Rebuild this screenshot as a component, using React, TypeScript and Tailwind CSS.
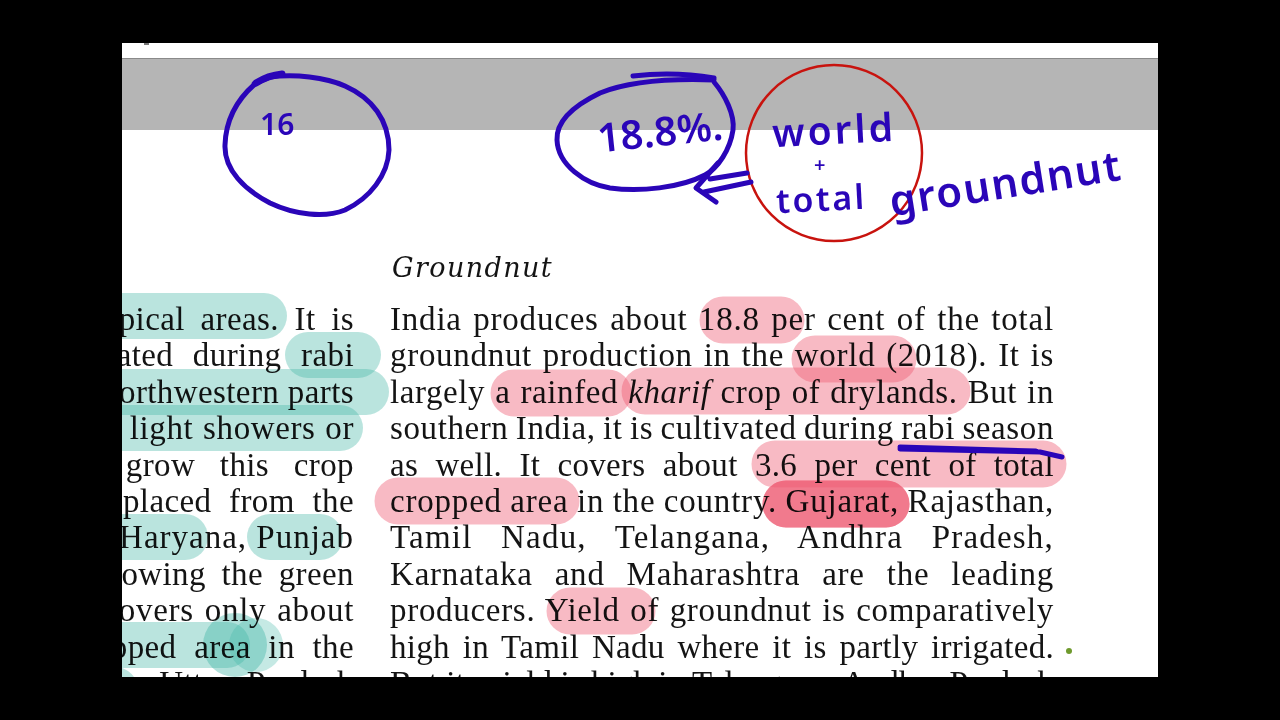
const rightLines = [
    { text: 'India produces about 18.8 per cent of the total', className: 'tracking-[0.8px] [word-spacing:-3px]' },
    { text: 'groundnut production in the world (2018). It is', className: 'tracking-[0.7px] [word-spacing:-3px]' },
    { text: 'largely a rainfed', italic: 'kharif', rest: 'crop of drylands. But in', className: 'tracking-[0.6px] [word-spacing:-2px]' },
    { text: 'southern India, it is cultivated during rabi season', className: 'tracking-[0.6px] [word-spacing:-4px]' },
    { text: 'as well. It covers about 3.6 per cent of total', className: 'tracking-[0.3px]' },
    { text: 'cropped area in the country. Gujarat, Rajasthan,', className: 'tracking-[0.8px] [word-spacing:-5px]' },
    { text: 'Tamil Nadu, Telangana, Andhra Pradesh,', className: 'tracking-[1.2px]' },
    { text: 'Karnataka and Maharashtra are the leading', className: 'tracking-[0.8px]' },
    { text: 'producers. Yield of groundnut is comparatively', className: 'tracking-[0.7px] [word-spacing:-5px]' },
    { text: 'high in Tamil Nadu where it is partly irrigated.', className: 'tracking-[0.3px]' },
    { text: 'But its yield is high in Telangana, Andhra Pradesh', className: 'tracking-[0px] [word-spacing:-1px]' },
];

const leftLines = [
    { text: 'tropical areas. It is', className: 'tracking-[0.4px] [word-spacing:7px]' },
    { text: 'cultivated during rabi', className: 'tracking-[0.4px] [word-spacing:11px]' },
    { text: 'northwestern parts', className: 'tracking-[0.4px]' },
    { text: 'with light showers or', className: 'tracking-[0.6px] [word-spacing:1px]' },
    { text: 'grow this crop', className: 'tracking-[0.4px] [word-spacing:16px]' },
    { text: 'displaced from the', className: 'tracking-[0.4px] [word-spacing:9px]' },
    { text: 'Haryana, Punjab', className: 'tracking-[1px]' },
    { text: 'following the green', className: 'tracking-[0.4px] [word-spacing:7px]' },
    { text: 'covers only about', className: 'tracking-[0.7px] [word-spacing:2px]' },
    { text: 'cropped area in the', className: 'tracking-[0.4px] [word-spacing:9px]' },
    { text: 'Uttar Pradesh', className: 'tracking-[0.4px] [word-spacing:9px]' },
];

const teal = [
    'M100 316H264',
    'M308 355H358',
    'M100 392H366',
    'M100 428H340',
    'M100 537H185',
    'M270 537H320',
    'M100 645H227',
    'M100 690H115',
];

const pink = [
    'M723 320H781',
    'M815 359H893',
    'M514 393H608',
    'M645 391H947',
    'M775 464H1043',
    'M398 501H556',
    'M786 504H886',
    'M786 504H886',
    'M786 504H886',
    'M570 611H632',
];

function Highlights() {
    return (
        <svg className="absolute inset-0 mix-blend-multiply" width="1036" height="634" viewBox="122 43 1036 634" fill="none">
            <g stroke="#3fb5a4" strokeOpacity="0.36" strokeWidth="46" strokeLinecap="round">
                {teal.map((d) => (
                    <path key={d} d={d} />
                ))}
            </g>
            <circle cx="235" cy="645" r="32" fill="#3fb5a4" fillOpacity="0.4" />
            <circle cx="256" cy="645" r="27" fill="#3fb5a4" fillOpacity="0.3" />
            <g stroke="#ef5a72" strokeOpacity="0.42" strokeWidth="47" strokeLinecap="round">
                {pink.map((d, i) => (
                    <path key={d + i} d={d} />
                ))}
            </g>
        </svg>
    );
}

function Ink() {
    return (
        <svg className="absolute inset-0" width="1036" height="634" viewBox="122 43 1036 634" fill="none">
            <circle cx="834" cy="153" r="88" stroke="#c8130e" strokeWidth="2.5" />
            <g stroke="#2a05b8" strokeWidth="5" strokeLinecap="round" strokeLinejoin="round">
                <path d="M255 84C240 97 226 115 225 145C224 170 245 190 270 203C295 215 325 218 345 210C370 198 388 175 389 150C389 120 372 98 345 86C325 77 295 74 270 77L254 84" />
                <path d="M256 83C264 78 272 75 282 74" strokeWidth="7" />
                <path d="M714 82C725 95 735 115 733 130C730 150 718 168 705 175C680 188 640 192 610 188C585 184 558 165 557 140C556 120 575 105 600 93C625 83 660 78 714 80" />
                <path d="M633 76C660 73 690 74 714 78" />
                <path d="M747 173L710 179M751 182L704 192M718 163L696 188L716 202" />
                <path d="M900 449L1040 452L1062 457" strokeWidth="5" />
                <path d="M900 447L1036 451" strokeWidth="5" />
            </g>
            <circle cx="1069" cy="651" r="3" fill="#6f9a2d" />
        </svg>
    );
}

function Notes() {
    const hand = "absolute whitespace-nowrap font-['Noto_Sans',sans-serif] font-semibold leading-none text-[#2a05b8]";
    return (
        <>
            <span className={`${hand} left-[138px] top-[66px] text-[30px]`}>16</span>
            <span className={`${hand} left-[475px] top-[68px] -rotate-6 text-[40px]`}>18.8%.</span>
            <span className={`${hand} left-[650px] top-[66px] -rotate-3 text-[39px] tracking-[3px]`}>world</span>
            <span className={`${hand} left-[692px] top-[112px] text-[20px]`}>+</span>
            <span className={`${hand} left-[654px] top-[138px] -rotate-3 text-[34px] tracking-[2.5px]`}>total</span>
            <span className={`${hand} left-[766px] top-[118px] -rotate-[9deg] text-[42px] tracking-[1.6px]`}>groundnut</span>
        </>
    );
}

export default function App() {
    return (
        <div className="h-screen w-full overflow-hidden bg-black px-[122px] py-[43px]">
            <div className="relative flex h-[634px] w-[1036px] flex-col overflow-hidden bg-white font-['Liberation_Serif',serif] text-[33px] text-[#141414]">
                <div className="h-[15px] shrink-0">
                    <div className="ml-[22px] h-[2px] w-[5px] bg-[#777777]" />
                </div>
                <div className="h-[72px] shrink-0 border-t border-[#8a8a8a] bg-[#b5b5b5]" />
                <h2 className="ml-[270px] mt-[121px] h-[50px] shrink-0 font-['DejaVu_Serif',serif] text-[27px] font-normal italic leading-[34px] tracking-[1.4px]">
                    Groundnut
                </h2>
                <div className="flex shrink-0 gap-[36px]">
                    <div className="w-[232px] shrink-0 overflow-hidden">
                        {leftLines.map((line) => (
                            <div
                                key={line.text}
                                className={`flex h-[36.4px] justify-end whitespace-pre leading-[36.4px] ${line.className}`}
                            >
                                {line.text}
                            </div>
                        ))}
                    </div>
                    <div className="w-[664px] shrink-0">
                        {rightLines.map((line) => (
                            <div
                                key={line.text}
                                className={`h-[36.4px] overflow-hidden text-justify leading-[36.4px] [text-align-last:justify] ${line.className}`}
                            >
                                {line.text}
                                {line.italic && (
                                    <>
                                        {' '}
                                        <em>{line.italic}</em> {line.rest}
                                    </>
                                )}
                            </div>
                        ))}
                    </div>
                </div>
                <Highlights />
                <Ink />
                <Notes />
            </div>
        </div>
    );
}
